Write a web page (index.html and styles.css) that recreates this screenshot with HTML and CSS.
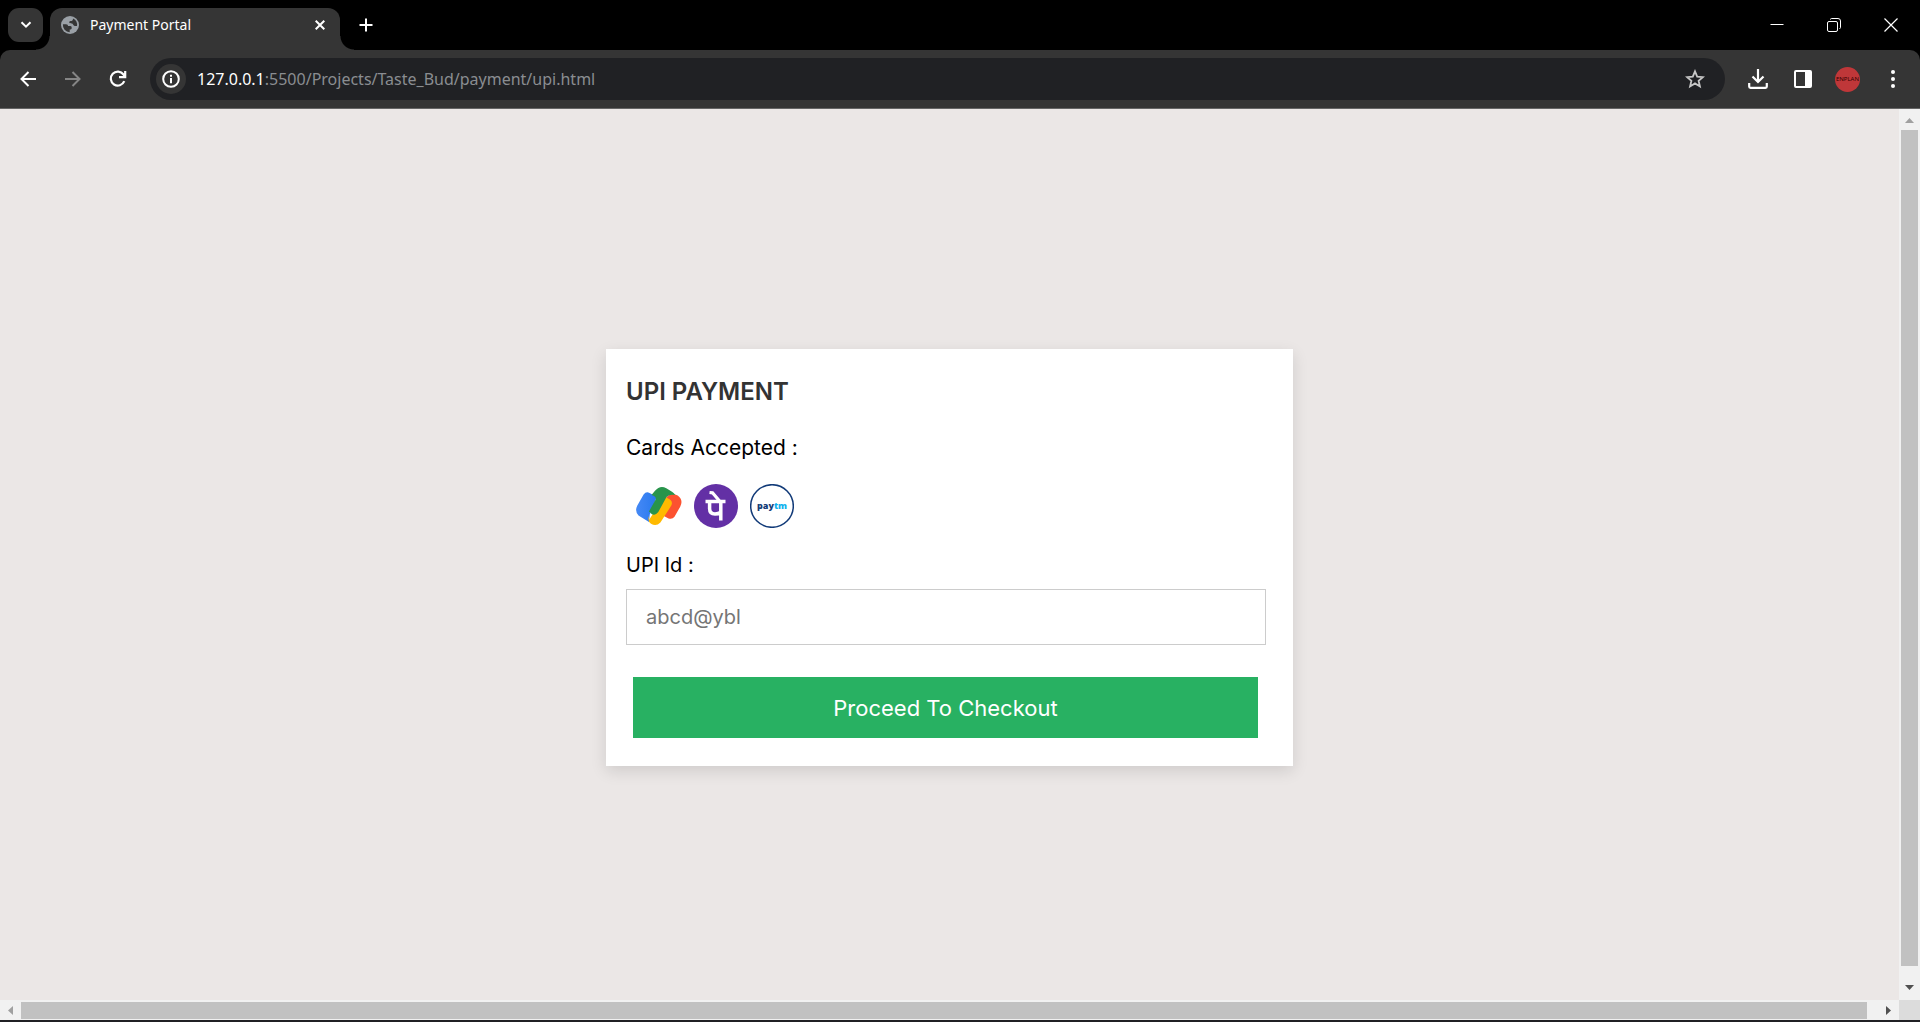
FILE: index.html
```html
<!DOCTYPE html>
<html lang="en">
<head>
<meta charset="utf-8">
<title>Payment Portal</title>
<link rel="stylesheet" href="styles.css">
</head>
<body>
<div class="window">
  <header class="tabstrip">
    <button class="tab-search" aria-label="Search tabs"><svg width="12" height="8" viewBox="0 0 12 8" fill="none" stroke="currentColor" stroke-width="2"><path d="M1.5 1.2 6 5.7l4.500-4.500"/></svg></button>
    <div class="tab">
      <svg width="18" height="18" viewBox="0 0 18 18"><circle cx="9" cy="9" r="9" fill="#9aa0a6"/><path d="M1.900 8.300h3c1.800 0 2.100 1 2.100 1.800h2.300c1.200 0 1.400.9 1.400 2 0 1-.8 1.500-2 1.500v2.600A7.200 7.200 0 0 1 1.900 8.300Z" fill="#353535"/><path d="M12 2.400c0 1.800-.8 2.500-2.400 2.600-1 .1-1.500.7-1.300 1.600.2.800 1 .9 2.400.9 1.500 0 1.500 2.300 3 2.500h2.300A7.200 7.200 0 0 0 12 2.400Z" fill="#353535"/></svg>
      <span class="tab-title">Payment Portal</span>
      <button class="tab-close" aria-label="Close tab"><svg width="10" height="10" viewBox="0 0 10 10" stroke="currentColor" stroke-width="2"><path d="m.7.7 8.600 8.600M9.300.7.700 9.300"/></svg></button>
    </div>
    <button class="new-tab" aria-label="New tab"><svg width="14" height="14" viewBox="0 0 14 14" stroke="currentColor" stroke-width="2"><path d="M7 .5v13M.5 7h13"/></svg></button>
    <div class="window-controls">
      <button aria-label="Minimize"><svg width="14" height="14" viewBox="0 0 14 14" stroke="currentColor"><path d="M.5 6.500h13"/></svg></button>
      <button aria-label="Restore"><svg width="14" height="14" viewBox="0 0 14 14" fill="none" stroke="currentColor"><rect x=".5" y="3.500" width="10" height="10" rx="1.500"/><path d="M3.500 1.500q0-1 1-1h6.500q2.500 0 2.500 2.500v6.500q0 1-1 1"/></svg></button>
      <button aria-label="Close"><svg width="14" height="14" viewBox="0 0 14 14" stroke="currentColor" stroke-width="1.200"><path d="m.5.5 13 13M13.500.5l-13 13"/></svg></button>
    </div>
  </header>
  <nav class="toolbar">
    <button class="tool" aria-label="Back"><svg width="18" height="18" viewBox="0 0 18 18" fill="none" stroke="currentColor" stroke-width="2"><path d="M17 9H3M9.500 2 2.500 9l7 7"/></svg></button>
    <button class="tool dim" aria-label="Forward"><svg width="18" height="18" viewBox="0 0 18 18" fill="none" stroke="currentColor" stroke-width="2"><path d="M1 9h14M8.500 2l7 7-7 7"/></svg></button>
    <button class="tool" aria-label="Reload"><svg width="18" height="18" viewBox="0 0 18 18" fill="none" stroke="currentColor" stroke-width="2.200"><path d="M15.300 11.200A7 7 0 1 1 14.500 4.500L16 6.500M16.200 1v6.200H10"/></svg></button>
    <div class="omnibox">
      <button class="site-info" aria-label="View site information"><svg width="18" height="18" viewBox="0 0 18 18" fill="none" stroke="currentColor" stroke-width="2"><circle cx="9" cy="9" r="7.800"/><path d="M9 8v5.200M9 4.700v2"/></svg></button>
      <div class="url" role="textbox" aria-label="Address"><span class="host">127.0.0.1</span>:5500/Projects/Taste_Bud/payment/upi.html</div>
      <button class="bookmark" aria-label="Bookmark this tab"><svg width="20" height="20" viewBox="0 0 20 20" fill="none" stroke="currentColor" stroke-width="1.800"><path d="m10 2.300 2.200 5.300 5.700.5-4.300 3.700 1.300 5.600-4.900-3-4.900 3 1.300-5.600L2.100 8.100l5.700-.5Z"/></svg></button>
    </div>
    <button class="tool" aria-label="Downloads"><svg width="20" height="20" viewBox="0 0 20 20" fill="none" stroke="currentColor" stroke-width="2.200"><path d="M10 0v12.500M4.500 7.500l5.500 5.500 5.500-5.500M1.200 14v3.500q0 1.300 1.300 1.300h15q1.300 0 1.300-1.300V14"/></svg></button>
    <button class="tool" aria-label="Side panel"><svg width="18" height="18" viewBox="0 0 18 18"><rect x="1" y="1" width="16" height="16" rx="1" fill="none" stroke="currentColor" stroke-width="2"/><path d="M11 1h6v16h-6z" fill="currentColor"/></svg></button>
    <button class="tool" aria-label="Profile"><span class="avatar">ENPLAN</span></button>
    <button class="tool" aria-label="Menu"><svg width="4" height="18" viewBox="0 0 4 18" fill="currentColor"><circle cx="2" cy="2" r="2"/><circle cx="2" cy="9" r="2"/><circle cx="2" cy="16" r="2"/></svg></button>
  </nav>
  <div class="viewport">
    <main class="page">
      <form class="card">
        <h1>UPI PAYMENT</h1>
        <p>Cards Accepted :</p>
        <div class="brands">
          <svg class="gpay" viewBox="0 0 46 44" role="img" aria-label="Google Pay">
            <defs><linearGradient id="blue"><stop offset="0" stop-color="#4589f5"/><stop offset="1" stop-color="#2878ee"/></linearGradient></defs>
            <path d="M21 29 29.500 14.200q5.500-6.800 12.200-2.700 6 4.600 2.500 11.200l-5.700 10q-2.300 3-6 1.700L26 31Z" fill="#fc5230"/>
            <path d="M13 38 2.500 31.500q-4-4.200-1.300-9.800l6.400-11.200q2.600-3.500 6-1.500l7.200 4-7 17.500Z" fill="url(#blue)"/>
            <path d="M13 36 26.800 14.700q1.800-2 4.500-.8l2.600 1.700q3.200 2.300 1.400 6L24.400 38.400q-4.200 4.400-9.400 1.300-3.800-2.700-2-7.700Z" fill="#ffba00"/>
            <path d="M15.500 11 19 6.800q5-5.900 11.300-2.600l5.700 3.500q2.200 1.200 3.200 3.300-5.500-1.200-8.700 2L22.300 28q-3.500 4.500-7.300 1.400 0 0-2.100-1.800l6.800-12.200q1-2.800-4.200-4.400Z" fill="#28944b"/>
          </svg>
          <svg class="brand" viewBox="0 0 44 44" role="img" aria-label="PhonePe"><circle cx="22" cy="22" r="22" fill="#6330a5"/><g fill="none" stroke="#fff" stroke-width="3.500"><path d="M11.500 17.500h20"/><path d="m15.500 8.500 3 .3L25.500 17" stroke-width="3.200"/><path d="M15.600 17.500v7q0 5.500 5.400 5.500 3.500 0 5.500-1.500M26.800 16v20.500"/></g></svg>
          <svg class="brand" viewBox="0 0 44 44" role="img" aria-label="Paytm"><circle cx="22" cy="22" r="21.300" fill="#fff" stroke="#113a78" stroke-width="1.500"/><text x="22" y="25" text-anchor="middle" class="paytm"><tspan fill="#153d78">pay</tspan><tspan fill="#10b1ee">tm</tspan></text></svg>
        </div>
        <label for="upi">UPI Id :</label>
        <input id="upi" type="text" placeholder="abcd@ybl">
        <button class="checkout" type="button">Proceed To Checkout</button>
      </form>
    </main>
    <div class="scroll vertical"><svg width="9" height="5" viewBox="0 0 9 5"><path d="m4.500 0 4.500 5H0Z" fill="#a0a0a0"/></svg><i class="thumb"></i><svg width="9" height="5" viewBox="0 0 9 5"><path d="M0 0h9L4.500 5Z" fill="#505050"/></svg></div>
    <div class="scroll horizontal"><svg width="5" height="9" viewBox="0 0 5 9"><path d="M5 0v9L0 4.500Z" fill="#a0a0a0"/></svg><i class="thumb"></i><svg width="5" height="9" viewBox="0 0 5 9"><path d="m0 0 5 4.500L0 9Z" fill="#505050"/></svg></div>
    <div class="corner"></div>
  </div>
</div>
</body>
</html>
```
FILE: styles.css
```css
* { box-sizing: border-box; }
body { margin: 0; font-family: Inter, "Liberation Sans", sans-serif; }
button { margin: 0; padding: 0; border: 0; background: none; color: #fff; font: inherit; display: flex; align-items: center; justify-content: center; }
svg { display: block; flex: none; }
.window { min-height: 100vh; display: flex; flex-direction: column; background: #000; font-size: 20px; border-bottom: 2px solid #202024; }

.tabstrip { height: 50px; display: flex; padding: 8px 1px 0 8px; }
.tab-search { width: 35px; height: 34px; border-radius: 11px; background: #353535; }
.tab { position: relative; width: 290px; height: 42px; margin-left: 7px; padding: 0 10px 8px 11px; display: flex; align-items: center; gap: 11px; border-radius: 12px 12px 0 0; background: #353535; color: #fff; }
.tab::before, .tab::after { content: ""; position: absolute; bottom: 0; width: 14px; height: 14px; }
.tab::before { right: 100%; background: radial-gradient(circle at 0 0, transparent 13px, #353535 14px); }
.tab::after { left: 100%; background: radial-gradient(circle at 100% 0, transparent 13px, #353535 14px); }
.tab-title { flex: 1; font: 14px/20px "Noto Sans", sans-serif; }
.tab-close { width: 20px; height: 20px; }
.new-tab { width: 34px; height: 34px; margin-left: 9px; }
.window-controls { margin-left: auto; display: flex; height: 34px; }
.window-controls button { width: 57px; }

.toolbar { height: 59px; display: flex; align-items: center; padding: 0 5px; background: #353535; border-radius: 10px 10px 0 0; border-bottom: 1px solid #656565; color: #fff; }
.tool { width: 45px; height: 40px; flex: none; }
.dim { color: #858585; }
.omnibox { flex: 1; height: 42px; margin: 0 10px; padding: 0 18px 0 6px; display: flex; align-items: center; gap: 11px; border-radius: 21px; background: #202124; }
.site-info { width: 30px; height: 30px; border-radius: 50%; background: #353535; }
.url { flex: 1; font: 16px/24px "Noto Sans", sans-serif; color: #8a8d91; white-space: nowrap; }
.host { color: #fff; }
.bookmark { width: 24px; height: 24px; color: #c7c7c7; }
.avatar { width: 25px; height: 25px; border-radius: 50%; background: #bf3739; color: #300; font: 6px/25px "Noto Sans", sans-serif; text-align: center; }

.viewport { flex: 1; display: grid; grid-template-columns: 1fr 21px; grid-template-rows: 1fr 20px; }
.page { display: flex; align-items: center; justify-content: center; padding: 26px 20px 20px; background: #ebe7e6; }
.card { width: 687px; max-width: 100%; padding: 20px; background: #fff; box-shadow: 0 5px 15px rgba(0, 0, 0, .12); }
h1 { margin: 0 0 18px; font-size: 24px; line-height: 46px; font-weight: 600; color: #333; }
p { margin: 0; font-size: 21px; line-height: 30px; }
.brands { display: flex; align-items: center; gap: 12px; padding: 0 10px; margin: 21px 0 22px; }
.gpay { width: 46px; height: 44px; }
.brand { width: 44px; height: 44px; }
.paytm { font: 900 9px "Noto Sans", sans-serif; }
label { display: block; line-height: 30px; margin-bottom: 9px; }
input { display: block; width: calc(100% - 7px); height: 56px; padding: 0 19px; border: 1px solid #ccc; font: inherit; background: #fff; }
input::placeholder { color: #757575; opacity: 1; }
.checkout { width: calc(100% - 22px); height: 61px; margin: 32px 0 8px 7px; background: #28b162; font-size: 22px; }

.scroll { display: flex; align-items: center; justify-content: space-between; background: #f1f1f1; }
.vertical { flex-direction: column; padding: 9px 0 10px; gap: 7px; }
.vertical svg:last-child { margin-top: 12px; }
.horizontal { padding: 0 8px; gap: 8px; }
.horizontal svg:last-child { margin-left: 11px; }
.thumb { flex: 1; background: #c1c1c1; }
.vertical .thumb { width: 17px; }
.horizontal .thumb { height: 17px; }
.corner { background: #dcdcdc; }
```
